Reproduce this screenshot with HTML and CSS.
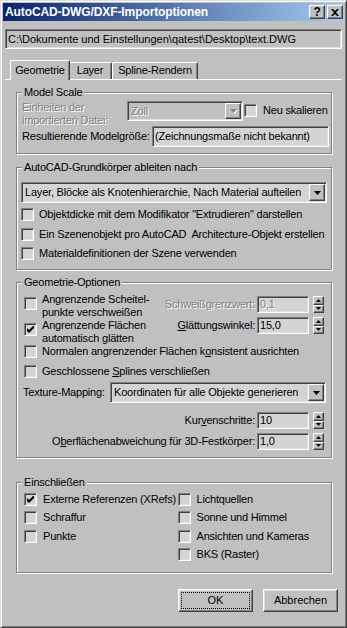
FILE: index.html
```html
<!DOCTYPE html>
<html lang="de">
<head>
    <meta charset="UTF-8">
    <meta name="viewport" content="width=device-width, initial-scale=1.0">
    <title>AutoCAD-DWG/DXF-Importoptionen</title>
<link rel="stylesheet" href="styles.css">
</head>
<body>
    <div class="window">
        <div class="titlebar">
            <span class="title">AutoCAD-DWG/DXF-Importoptionen</span>
            <div class="caption-buttons">
                <span class="caption-btn">?</span>
                <span class="caption-btn">
                    <svg width="8" height="7" viewBox="0 0 8 7"><path d="M0 0h2l2 2 2-2h2l-3 3.5 3 3.5h-2l-2-2-2 2h-2l3-3.5z"/></svg>
                </span>
            </div>
        </div>

        <div class="path-field sunken">C:\Dokumente und Einstellungen\qatest\Desktop\text.DWG</div>

        <div class="tabs">
            <span class="tab tab-geometry active">Geometrie</span>
            <span class="tab tab-layer">Layer</span>
            <span class="tab tab-spline">Spline-Rendern</span>
        </div>

        <div class="tab-panel">
            <div class="group group-scale">
                <span class="group-title">Model Scale</span>
                <div class="scale-row">
                    <span class="units-label disabled">Einheiten der<br>importierten Datei:</span>
                    <div class="combo combo-units sunken disabled">
                        <span class="combo-text">Zoll</span>
                        <span class="combo-btn raised">
                            <svg width="7" height="4" viewBox="0 0 7 4"><path d="M0 0h7l-3.5 4z"/></svg>
                        </span>
                    </div>
                    <div class="check rescale">
                        <span class="box sunken"></span>
                        <span>Neu skalieren</span>
                    </div>
                </div>
                <div class="size-row">
                    <span>Resultierende Modelgröße:</span>
                    <div class="edit size-field sunken">(Zeichnungsmaße nicht bekannt)</div>
                </div>
            </div>

            <div class="group group-derive">
                <span class="group-title">AutoCAD-Grundkörper ableiten nach</span>
                <div class="combo sunken">
                    <span class="combo-text">Layer, Blöcke als Knotenhierarchie, Nach Material aufteilen</span>
                    <span class="combo-btn raised">
                        <svg width="7" height="4" viewBox="0 0 7 4"><path d="M0 0h7l-3.5 4z"/></svg>
                    </span>
                </div>
                <div class="check-list">
                    <div class="check"><span class="box sunken"></span><span>Objektdicke mit dem Modifikator "Extrudieren" darstellen</span></div>
                    <div class="check"><span class="box sunken"></span><span>Ein Szenenobjekt pro AutoCAD&nbsp; Architecture-Objekt erstellen</span></div>
                    <div class="check"><span class="box sunken"></span><span>Materialdefinitionen der Szene verwenden</span></div>
                </div>
            </div>

            <div class="group group-geo">
                <span class="group-title">Geometrie-Optionen</span>
                <div class="geo-top">
                    <div class="geo-checks">
                        <div class="check two-line"><span class="box sunken"></span><span>Angrenzende Scheitel-<br>punkte verschweißen</span></div>
                        <div class="check two-line">
                            <span class="box sunken">
                                <svg width="7" height="7" viewBox="0 0 7 7"><path d="M0 2l2 2 5-5v3l-5 5-2-2z"/></svg>
                            </span>
                            <span>Angrenzende Flächen<br>automatisch glätten</span>
                        </div>
                    </div>
                    <div class="geo-spinners">
                        <div class="spin-row disabled">
                            <span class="spin-label">Schweißgrenzwert:</span>
                            <div class="edit spin-field sunken">0,1</div>
                            <div class="spinner">
                                <span class="spin-btn raised"><svg width="5" height="3" viewBox="0 0 5 3"><path d="M2.5 0l2.5 3h-5z"/></svg></span>
                                <span class="spin-btn raised"><svg width="5" height="3" viewBox="0 0 5 3"><path d="M0 0h5l-2.5 3z"/></svg></span>
                            </div>
                        </div>
                        <div class="spin-row">
                            <span class="spin-label"><u>G</u>lättungswinkel:</span>
                            <div class="edit spin-field sunken">15,0</div>
                            <div class="spinner">
                                <span class="spin-btn raised"><svg width="5" height="3" viewBox="0 0 5 3"><path d="M2.5 0l2.5 3h-5z"/></svg></span>
                                <span class="spin-btn raised"><svg width="5" height="3" viewBox="0 0 5 3"><path d="M0 0h5l-2.5 3z"/></svg></span>
                            </div>
                        </div>
                    </div>
                </div>
                <div class="check"><span class="box sunken"></span><span>Normalen angrenzender Flächen k<u>o</u>nsistent ausrichten</span></div>
                <div class="check splines"><span class="box sunken"></span><span>Geschlossene <u>S</u>plines verschließen</span></div>
                <div class="mapping-row">
                    <span class="mapping-label">Texture-Mapping:</span>
                    <div class="combo sunken">
                        <span class="combo-text">Koordinaten für alle Objekte generieren</span>
                        <span class="combo-btn raised">
                            <svg width="7" height="4" viewBox="0 0 7 4"><path d="M0 0h7l-3.5 4z"/></svg>
                        </span>
                    </div>
                </div>
                <div class="spin-row curve-row">
                    <span class="spin-label">Kur<u>v</u>enschritte:</span>
                    <div class="edit spin-field sunken">10</div>
                    <div class="spinner">
                        <span class="spin-btn raised"><svg width="5" height="3" viewBox="0 0 5 3"><path d="M2.5 0l2.5 3h-5z"/></svg></span>
                        <span class="spin-btn raised"><svg width="5" height="3" viewBox="0 0 5 3"><path d="M0 0h5l-2.5 3z"/></svg></span>
                    </div>
                </div>
                <div class="spin-row surface-row">
                    <span class="spin-label">O<u>b</u>erflächenabweichung für 3D-Festkörper:</span>
                    <div class="edit spin-field sunken">1,0</div>
                    <div class="spinner">
                        <span class="spin-btn raised"><svg width="5" height="3" viewBox="0 0 5 3"><path d="M2.5 0l2.5 3h-5z"/></svg></span>
                        <span class="spin-btn raised"><svg width="5" height="3" viewBox="0 0 5 3"><path d="M0 0h5l-2.5 3z"/></svg></span>
                    </div>
                </div>
            </div>

            <div class="group group-include">
                <span class="group-title">Einschließen</span>
                <div class="include-col">
                    <div class="check">
                        <span class="box sunken">
                            <svg width="7" height="7" viewBox="0 0 7 7"><path d="M0 2l2 2 5-5v3l-5 5-2-2z"/></svg>
                        </span>
                        <span>Externe Referenzen (XRefs)</span>
                    </div>
                    <div class="check"><span class="box sunken"></span><span>Schraffur</span></div>
                    <div class="check"><span class="box sunken"></span><span>Punkte</span></div>
                </div>
                <div class="include-col">
                    <div class="check"><span class="box sunken"></span><span>Lichtquellen</span></div>
                    <div class="check"><span class="box sunken"></span><span>Sonne und Himmel</span></div>
                    <div class="check"><span class="box sunken"></span><span>Ansichten und Kameras</span></div>
                    <div class="check"><span class="box sunken"></span><span>BKS (Raster)</span></div>
                </div>
            </div>
        </div>

        <div class="dialog-buttons">
            <button class="push-button raised focused">OK</button>
            <button class="push-button raised">Abbrechen</button>
        </div>
    </div>
</body>
</html>
```

FILE: styles.css
```css
:root {
    --face: #c0c0c0;
    --shadow: #808080;
    --dark: #404040;
    --light: #ffffff;
    --well: #d4d4d4;
    --title-start: #0a246a;
    --title-end: #a6caf0;
}

* {
    box-sizing: border-box;
}

body {
    margin: 0;
    font-family: "Liberation Sans", Arial, sans-serif;
    font-size: 11px;
    line-height: 13px;
    letter-spacing: -0.2px;
    color: #000;
    background: var(--face);
}

/* classic 3d borders */
.raised {
    border: 1px solid;
    border-color: var(--light) var(--dark) var(--dark) var(--light);
    box-shadow: inset -1px -1px 0 var(--shadow);
    background: var(--face);
}

.sunken {
    border: 1px solid;
    border-color: var(--shadow) var(--light) var(--light) var(--shadow);
    box-shadow: inset 1px 1px 0 var(--dark), inset -1px -1px 0 #dfdfdf;
}

.disabled,
.disabled .combo-text,
.disabled .spin-label,
.disabled .spin-field {
    color: var(--shadow);
    text-shadow: 1px 1px 0 var(--light);
}

.window {
    width: 347px;
    height: 628px;
    padding: 2px;
    border: 1px solid;
    border-color: #dfdfdf var(--dark) var(--dark) #dfdfdf;
    box-shadow: inset 1px 1px 0 var(--light), inset -1px -1px 0 var(--shadow);
    background: var(--face);
}

.titlebar {
    display: flex;
    align-items: center;
    height: 18px;
    padding: 0 1px 0 2px;
    background: linear-gradient(to right, var(--title-start), var(--title-end));
}

.title {
    flex-grow: 1;
    color: #fff;
    font-size: 12px;
    font-weight: bold;
    letter-spacing: -0.1px;
}

.caption-buttons {
    display: flex;
    gap: 2px;
}

.caption-btn {
    display: flex;
    align-items: center;
    justify-content: center;
    width: 16px;
    height: 14px;
    border: 1px solid;
    border-color: var(--light) var(--dark) var(--dark) var(--light);
    box-shadow: inset -1px -1px 0 var(--shadow);
    background: var(--face);
    font-size: 12px;
    font-weight: bold;
}

.path-field {
    width: 337px;
    height: 20px;
    margin: 8px 0 0 2px;
    padding: 0 2px;
    line-height: 18px;
    letter-spacing: 0;
    white-space: nowrap;
}

/* tabs */
.tabs {
    display: flex;
    align-items: flex-end;
    height: 19px;
    margin-top: 11px;
    padding-left: 9px;
}

.tab {
    height: 17px;
    line-height: 15px;
    text-align: center;
    border: 1px solid;
    border-color: var(--light) var(--dark) transparent var(--light);
    border-bottom: none;
    border-radius: 2px 2px 0 0;
    box-shadow: inset -1px 0 0 var(--shadow);
    background: var(--face);
}

.tab-geometry {
    width: 56px;
}

.tab-layer {
    width: 44px;
}

.tab-spline {
    width: 86px;
}

.tab.active {
    position: relative;
    z-index: 1;
    width: 60px;
    height: 20px;
    margin: 0 -2px -1px -2px;
    line-height: 18px;
}

.tab-panel {
    margin: 0 2px;
    border-top: 1px solid var(--light);
    padding-left: 11px;
}

/* group boxes */
.group {
    position: relative;
    width: 316px;
    border: 1px solid var(--shadow);
    box-shadow: 1px 1px 0 var(--light), inset 1px 1px 0 var(--light);
}

.group-title {
    position: absolute;
    top: -7px;
    left: 5px;
    padding: 0 2px;
    background: var(--face);
}

.group-scale {
    height: 62px;
    margin-top: 12px;
    padding: 8px 2px 0 5px;
}

.group-derive {
    height: 103px;
    margin-top: 13px;
    padding: 14px 4px 0 4px;
}

.group-geo {
    height: 176px;
    margin-top: 12px;
    padding: 10px 5px 0 7px;
}

.group-include {
    display: flex;
    height: 91px;
    margin-top: 24px;
    padding: 7px 0 0 7px;
}

/* checkboxes */
.check {
    display: flex;
    align-items: center;
    gap: 5px;
    height: 13px;
    white-space: nowrap;
}

.box {
    display: flex;
    align-items: center;
    justify-content: center;
    flex: none;
    width: 13px;
    height: 13px;
    background: var(--well);
}

.check.two-line {
    align-items: flex-start;
    height: 26px;
}

.check.two-line .box {
    margin-top: 4px;
}

/* combo boxes and edits */
.combo {
    display: flex;
    height: 21px;
    padding: 1px;
    background: var(--well);
}

.combo-text {
    flex-grow: 1;
    padding-left: 2px;
    line-height: 17px;
    white-space: nowrap;
    overflow: hidden;
}

.combo-btn {
    display: flex;
    align-items: center;
    justify-content: center;
    flex: none;
    width: 16px;
}

.combo.disabled {
    background: var(--face);
}

.combo.disabled .combo-btn svg {
    fill: var(--shadow);
    filter: drop-shadow(1px 1px 0 var(--light));
}

.edit {
    padding: 0 2px;
    white-space: nowrap;
    background: var(--well);
}

/* model scale */
.scale-row {
    display: flex;
    align-items: flex-start;
    height: 25px;
}

.units-label {
    width: 105px;
}

.combo-units {
    width: 116px;
    height: 20px;
}

.combo-units .combo-text {
    line-height: 16px;
}

.rescale {
    margin: 3px 0 0 1px;
    gap: 6px;
}

.size-row {
    display: flex;
    align-items: center;
    justify-content: space-between;
    height: 21px;
}

.size-field {
    width: 177px;
    height: 21px;
    line-height: 19px;
}

/* derive options */
.check-list {
    margin-top: 2px;
}

.check-list .check {
    height: 19.5px;
}

/* geometry options */
.geo-top {
    display: flex;
    height: 52px;
}

.geo-checks {
    flex: none;
    width: 130px;
}

.geo-spinners {
    display: flex;
    flex-direction: column;
    gap: 4px;
    flex-grow: 1;
    padding-top: 3px;
}

.spin-row {
    display: flex;
    align-items: center;
    justify-content: flex-end;
    height: 17px;
    margin-right: 2px;
}

.spin-field {
    width: 52px;
    height: 17px;
    margin-left: 2px;
    line-height: 15px;
}

.spinner {
    display: flex;
    flex-direction: column;
    width: 11px;
    height: 17px;
    margin-left: 4px;
}

.spin-btn {
    display: flex;
    align-items: center;
    justify-content: center;
    height: 8.5px;
}

.check.splines {
    margin-top: 7px;
}

.mapping-row {
    display: flex;
    align-items: center;
    margin-top: 4px;
}

.mapping-label {
    width: 86px;
    margin-left: -1px;
    flex: none;
}

.mapping-row .combo {
    flex-grow: 1;
    margin-left: 1px;
}

.curve-row {
    margin-top: 9px;
}

.surface-row {
    margin-top: 4px;
}

/* include */
.include-col {
    width: 163px;
}

.include-col .check {
    height: 18.5px;
    gap: 6px;
}

/* dialog buttons */
.dialog-buttons {
    display: flex;
    justify-content: flex-end;
    gap: 10px;
    margin: 16px 6px 0 0;
}

.push-button {
    width: 75px;
    height: 23px;
    padding: 0;
    font: inherit;
    color: #000;
    box-shadow: inset -1px -1px 0 var(--shadow), inset 1px 1px 0 #dfdfdf;
}

.push-button.focused {
    outline: 1px dotted #000;
    outline-offset: -4px;
}
```
